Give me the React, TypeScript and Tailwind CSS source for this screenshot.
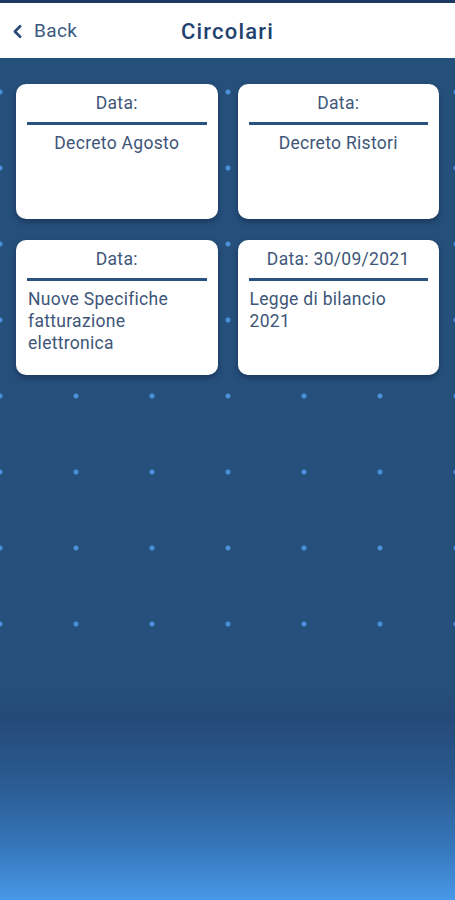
import { ChevronLeft } from 'lucide-react';

type Circolare = {
    date: string;
    title: string;
    centered: boolean;
};

const circolari: Circolare[] = [
    { date: '', title: 'Decreto Agosto', centered: true },
    { date: '', title: 'Decreto Ristori', centered: true },
    { date: '', title: 'Nuove Specifiche fatturazione elettronica', centered: false },
    { date: '30/09/2021', title: 'Legge di bilancio 2021', centered: false },
];

const CircolareCard = ({ item }: { item: Circolare }) => (
    <div className="h-[135px] rounded-[10px] bg-white px-[11px] pt-[8px] shadow-[0_3px_6px_rgba(10,25,50,0.45)]">
        <p className="text-center text-[17.5px] leading-[22px] tracking-[0.3px] text-[#40577a]">
            Data:{item.date ? ` ${item.date}` : ''}
        </p>
        <div className="mt-[8px] h-[3px] bg-[#2a5280]" />
        <p
            className={`mt-[7px] text-[17.5px] leading-[22px] tracking-[0.3px] text-[#3e5679] ${
                item.centered ? 'text-center' : 'pl-[1px] pr-4 text-left'
            }`}
        >
            {item.title}
        </p>
    </div>
);

export default function App() {
    return (
        <div className="flex min-h-[900px] flex-col bg-[#26507c] font-['Roboto','Liberation_Sans',sans-serif]">
            <header className="flex h-[58px] items-center border-t-[3px] border-[#1c3963] bg-white pt-[2px]">
                <div className="flex w-[120px] items-center pl-[7px] text-[#3a5a82]">
                    <ChevronLeft size={21} strokeWidth={3} className="text-[#2a4a74]" />
                    <span className="ml-[6px] text-[19px] tracking-[0.4px]">Back</span>
                </div>
                <h1 className="flex-1 pr-[120px] text-center text-[22px] font-medium tracking-[1.2px] text-[#1f426e]">
                    Circolari
                </h1>
            </header>

            <main
                className="flex-1 bg-[linear-gradient(180deg,transparent_0px,transparent_590px,#26507c_625px,#254a79_660px,#2a5a90_722px,#3677bb_790px,#4899e8_842px),radial-gradient(circle,#4b90d9_2px,transparent_3px)] bg-[length:100%_100%,76px_76px] bg-[position:0_0,-38px_-4px] px-4 pt-[26px]"
            >
                <div className="grid grid-cols-2 gap-x-5 gap-y-[21px]">
                    {circolari.map((item) => (
                        <CircolareCard key={item.title} item={item} />
                    ))}
                </div>
            </main>
        </div>
    );
}
